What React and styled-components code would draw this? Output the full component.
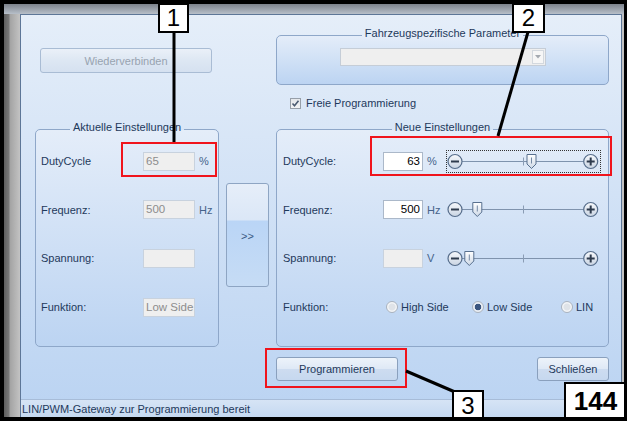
import styled, { createGlobalStyle } from "styled-components";

const navy = "#1e395b";

const GlobalStyle = createGlobalStyle`
  html, body { margin: 0; padding: 0; background: #fff; }
  body { font-family: "Liberation Sans", Arial, sans-serif; }
`;

const Screenshot = styled.div`
  position: relative;
  width: 627px;
  height: 421px;
  box-sizing: border-box;
  border: 4px solid #000;
  border-right-width: 3px;
  overflow: hidden;
`;

const Frame = styled.div`
  height: 100%;
  box-sizing: border-box;
  display: flex;
  padding: 10px 2px 0 16px;
  background:
    linear-gradient(to bottom, #7c828b 0, #b7bfc9 10px, transparent 10px),
    linear-gradient(to right, #5d5d5d 0, #777 5px, #a3a3a3 6px, #c3c3c3 16px);
`;

const Window = styled.div`
  flex: 1;
  display: flex;
  flex-direction: column;
  border: 1px solid #5d7697;
  border-bottom: 0;
  background: linear-gradient(to bottom, #e5eef9, #bad3f2);
`;

const Content = styled.div`
  flex: 1;
  display: grid;
  grid-template-columns: 184px 43px 333px;
  grid-template-rows: 58px 36px 226px 34px;
  column-gap: 7px;
  padding: 12px 0 0 14px;
`;

const StatusBar = styled.div`
  height: 17px;
  border-top: 1px solid #a7bcd8;
  background: linear-gradient(#d6e4f5, #c5d9f1);
  font-size: 11px;
  line-height: 18px;
  color: ${navy};
  padding-left: 1px;
`;

const Group = styled.fieldset`
  grid-column: ${(p) => p.$col};
  margin: 0;
  padding: 0;
  min-width: 0;
  box-sizing: border-box;
  border: 1px solid #8ea7c9;
  border-radius: 5px;
  background: linear-gradient(to bottom, #e4edf9, #bcd4f2);
`;

const Legend = styled.legend`
  margin: 0 auto;
  padding: 0 3px 5px;
  font-size: 11px;
  line-height: 12px;
  color: ${navy};
`;

const Button = styled.button`
  box-sizing: border-box;
  width: ${(p) => p.$width}px;
  height: ${(p) => p.$height || 24}px;
  padding: 0;
  font: 11px "Liberation Sans", Arial, sans-serif;
  color: ${(p) => (p.disabled ? "#98a3b0" : navy)};
  border: 1px solid ${(p) => (p.disabled ? "#a9bcd4" : "#8aa0bd")};
  border-radius: 3px;
  background: ${(p) =>
    p.disabled
      ? "linear-gradient(#eaf0f8, #dde7f3 50%, #d5e1f0)"
      : "linear-gradient(#edf3fa, #dfe9f6 48%, #cddcf0 52%, #c6d8ef)"};
`;

const ReconnectButton = styled(Button)`
  align-self: start;
  margin: 21px 0 0 5px;
`;

const TransferButton = styled.button`
  grid-column: 2;
  align-self: start;
  margin-top: 62px;
  height: 104px;
  padding: 0;
  box-sizing: border-box;
  border: 1px solid #8ea5c3;
  border-radius: 3px;
  font: 11px "Liberation Sans", Arial, sans-serif;
  color: #3a5a85;
  padding-top: 2px;
  background: linear-gradient(#e6eef9 0, #dbe7f7 36px, #bad5f6 37px, #c6dcf5 100%);
`;

const Combo = styled.div`
  width: 206px;
  height: 18px;
  box-sizing: border-box;
  margin: 4px auto 0;
  border: 1px solid #c5cdd7;
  background: #efefef;
  display: flex;
  justify-content: flex-end;
  align-items: center;
  padding-right: 1px;
`;

const ComboArrow = styled.div`
  width: 12px;
  height: 14px;
  box-sizing: border-box;
  border: 1px solid #d3d8de;
  background: #f6f6f6;
  display: flex;
  align-items: center;
  justify-content: center;
`;

const CheckRow = styled.label`
  grid-column: 3;
  display: flex;
  align-items: center;
  gap: 5px;
  padding-left: 14px;
  font-size: 11px;
  color: ${navy};
`;

const CheckBox = styled.span`
  width: 11px;
  height: 11px;
  box-sizing: border-box;
  border: 1px solid #979fa9;
  background: linear-gradient(#e4e7eb, #f2f3f5);
  display: flex;
  align-items: center;
  justify-content: center;
`;

const Rows = styled.div`
  display: grid;
  grid-template-columns: ${(p) => p.$cols};
  grid-auto-rows: 20px;
  row-gap: 28.7px;
  align-items: center;
  padding: 13px 0 0 ${(p) => p.$pad}px;
`;

const Label = styled.span`
  font-size: 11px;
  color: ${navy};
  white-space: nowrap;
`;

const Unit = styled.span`
  font-size: 11px;
  color: #46638a;
  padding-left: 4px;
`;

const TextBox = styled.div`
  height: 19px;
  box-sizing: border-box;
  border: 1px solid ${(p) => (p.$disabled ? "#c8d2de" : "#abb8c9")};
  background: ${(p) => (p.$disabled ? "#efefef" : "#fff")};
  color: ${(p) => (p.$disabled ? "#8d8d8d" : "#000")};
  font-size: 11.5px;
  line-height: 17px;
  text-align: ${(p) => p.$align || "left"};
  padding: 0 2px;
  white-space: nowrap;
  overflow: hidden;
`;

const SliderBox = styled.div`
  width: 155px;
  height: 23px;
  box-sizing: border-box;
  border: 1px dotted ${(p) => (p.$focused ? "#333" : "transparent")};
`;

const RadioGroup = styled.div`
  grid-column: 2 / -1;
  display: flex;
  align-items: center;
  padding-left: 3px;
`;

const RadioOption = styled.span`
  width: ${(p) => p.$width}px;
  display: flex;
  align-items: center;
  gap: 3px;
  font-size: 11px;
  color: ${navy};
`;

const RadioDot = styled.span`
  width: 12px;
  height: 12px;
  box-sizing: border-box;
  border-radius: 50%;
  border: 1px solid #aab3bf;
  background: ${(p) =>
    p.$checked
      ? "radial-gradient(circle, #3b5680 0 3px, #e9eef4 3.6px)"
      : "radial-gradient(circle, #dfe3e8 0 3px, #f3f5f7 4px)"};
`;

const ButtonRow = styled.div`
  grid-column: 3;
  display: flex;
  justify-content: space-between;
  align-items: flex-end;
`;

/* annotation overlay */

const Marks = styled.svg`
  position: absolute;
  left: -4px;
  top: -4px;
  pointer-events: none;
`;

const RedBox = styled.div`
  position: absolute;
  left: ${(p) => p.$x - 4}px;
  top: ${(p) => p.$y - 4}px;
  width: ${(p) => p.$w}px;
  height: ${(p) => p.$h}px;
  box-sizing: border-box;
  border: 2px solid #f0141c;
`;

const Callout = styled.div`
  position: absolute;
  left: ${(p) => p.$x - 4}px;
  top: ${(p) => p.$y - 4}px;
  width: ${(p) => p.$w}px;
  height: ${(p) => p.$h}px;
  box-sizing: border-box;
  border: 2px solid #000;
  background: #fff;
  display: flex;
  align-items: center;
  justify-content: center;
  font-family: "Liberation Sans", Arial, sans-serif;
  font-size: ${(p) => p.$size || 24}px;
  font-weight: ${(p) => (p.$bold ? 700 : 400)};
  color: #000;
`;

function Slider({ id, thumb, focused }) {
  const cy = 10.5;
  return (
    <SliderBox $focused={focused}>
      <svg width="153" height="21" viewBox="0 0 153 21">
        <defs>
          <linearGradient id={`btn-${id}`} x1="0" y1="0" x2="0" y2="1">
            <stop offset="0" stopColor="#f7f9fc" />
            <stop offset="1" stopColor="#c9d4e2" />
          </linearGradient>
          <linearGradient id={`thumb-${id}`} x1="0" y1="0" x2="0" y2="1">
            <stop offset="0" stopColor="#ffffff" />
            <stop offset="1" stopColor="#cdd8e6" />
          </linearGradient>
        </defs>
        <line x1="15" y1={cy} x2="137" y2={cy} stroke="#7f93ad" />
        <line x1="76.5" y1="6.5" x2="76.5" y2="14.5" stroke="#8a9cb4" />
        <circle cx="8" cy={cy} r="7" fill={`url(#btn-${id})`} stroke="#566d8b" strokeWidth="1.2" />
        <line x1="4" y1={cy} x2="12" y2={cy} stroke="#2e3b4d" strokeWidth="2" />
        <circle cx="143.7" cy={cy} r="7" fill={`url(#btn-${id})`} stroke="#566d8b" strokeWidth="1.2" />
        <line x1="139.7" y1={cy} x2="147.7" y2={cy} stroke="#2e3b4d" strokeWidth="2" />
        <line x1="143.7" y1={cy - 4} x2="143.7" y2={cy + 4} stroke="#2e3b4d" strokeWidth="2" />
        <path
          d={`M${thumb - 4.5} 3.5 H${thumb + 4.5} V13 L${thumb} 17.5 L${thumb - 4.5} 13 Z`}
          fill={`url(#thumb-${id})`}
          stroke="#58708f"
        />
        <line x1={thumb} y1="6.5" x2={thumb} y2="12.5" stroke="#7489a5" />
      </svg>
    </SliderBox>
  );
}

export default function App() {
  return (
    <>
      <GlobalStyle />
      <Screenshot>
        <Frame>
          <Window>
            <Content>
              <ReconnectButton disabled $width={172} $height={25}>
                Wiederverbinden
              </ReconnectButton>
              <Group $col={3}>
                <Legend>Fahrzeugspezifische Parameter</Legend>
                <Combo>
                  <ComboArrow>
                    <svg width="6" height="4" viewBox="0 0 6 4">
                      <path d="M0 0 H6 L3 3.5 Z" fill="#a4a9b0" />
                    </svg>
                  </ComboArrow>
                </Combo>
              </Group>

              <CheckRow>
                <CheckBox>
                  <svg width="9" height="9" viewBox="0 0 9 9">
                    <path d="M1.5 4.5 L3.5 6.8 L7.5 1.8" fill="none" stroke="#4b5b72" strokeWidth="1.6" />
                  </svg>
                </CheckBox>
                Freie Programmierung
              </CheckRow>

              <Group $col={1}>
                <Legend>Aktuelle Einstellungen</Legend>
                <Rows $cols="102px 52px auto" $pad={5}>
                  <Label>DutyCycle</Label>
                  <TextBox $disabled>65</TextBox>
                  <Unit>%</Unit>
                  <Label>Frequenz:</Label>
                  <TextBox $disabled>500</TextBox>
                  <Unit>Hz</Unit>
                  <Label>Spannung:</Label>
                  <TextBox $disabled />
                  <span />
                  <Label>Funktion:</Label>
                  <TextBox $disabled>Low Side</TextBox>
                  <span />
                </Rows>
              </Group>

              <TransferButton>&gt;&gt;</TransferButton>

              <Group $col={3}>
                <Legend>Neue Einstellungen</Legend>
                <Rows $cols="100px 40px 23px 155px" $pad={6}>
                  <Label>DutyCycle:</Label>
                  <TextBox $align="right">63</TextBox>
                  <Unit>%</Unit>
                  <Slider id="duty" thumb={84.5} focused />
                  <Label>Frequenz:</Label>
                  <TextBox $align="right">500</TextBox>
                  <Unit>Hz</Unit>
                  <Slider id="freq" thumb={30.3} />
                  <Label>Spannung:</Label>
                  <TextBox $disabled />
                  <Unit>V</Unit>
                  <Slider id="volt" thumb={22.3} />
                  <Label>Funktion:</Label>
                  <RadioGroup>
                    <RadioOption $width={86}>
                      <RadioDot />
                      High Side
                    </RadioOption>
                    <RadioOption $width={89}>
                      <RadioDot $checked />
                      Low Side
                    </RadioOption>
                    <RadioOption>
                      <RadioDot />
                      LIN
                    </RadioOption>
                  </RadioGroup>
                </Rows>
              </Group>

              <ButtonRow>
                <Button $width={122}>Programmieren</Button>
                <Button $width={72}>Schließen</Button>
              </ButtonRow>
            </Content>
            <StatusBar>LIN/PWM-Gateway zur Programmierung bereit</StatusBar>
          </Window>
        </Frame>

        <RedBox $x={121} $y={142} $w={96} $h={35} />
        <RedBox $x={370} $y={136} $w={242} $h={40} />
        <RedBox $x={265} $y={348} $w={142} $h={40} />

        <Marks width="627" height="421" viewBox="0 0 627 421">
          <line x1="174" y1="32" x2="174" y2="142" stroke="#000" strokeWidth="3" />
          <line x1="528" y1="32" x2="498" y2="136" stroke="#000" strokeWidth="3" />
          <line x1="406" y1="371" x2="455" y2="392" stroke="#000" strokeWidth="3" />
        </Marks>

        <Callout $x={158} $y={3} $w={31} $h={30}>1</Callout>
        <Callout $x={512} $y={3} $w={33} $h={30}>2</Callout>
        <Callout $x={452} $y={390} $w={32} $h={31}>3</Callout>
        <Callout $x={564} $y={382} $w={63} $h={39} $size={26} $bold>
          144
        </Callout>
      </Screenshot>
    </>
  );
}
